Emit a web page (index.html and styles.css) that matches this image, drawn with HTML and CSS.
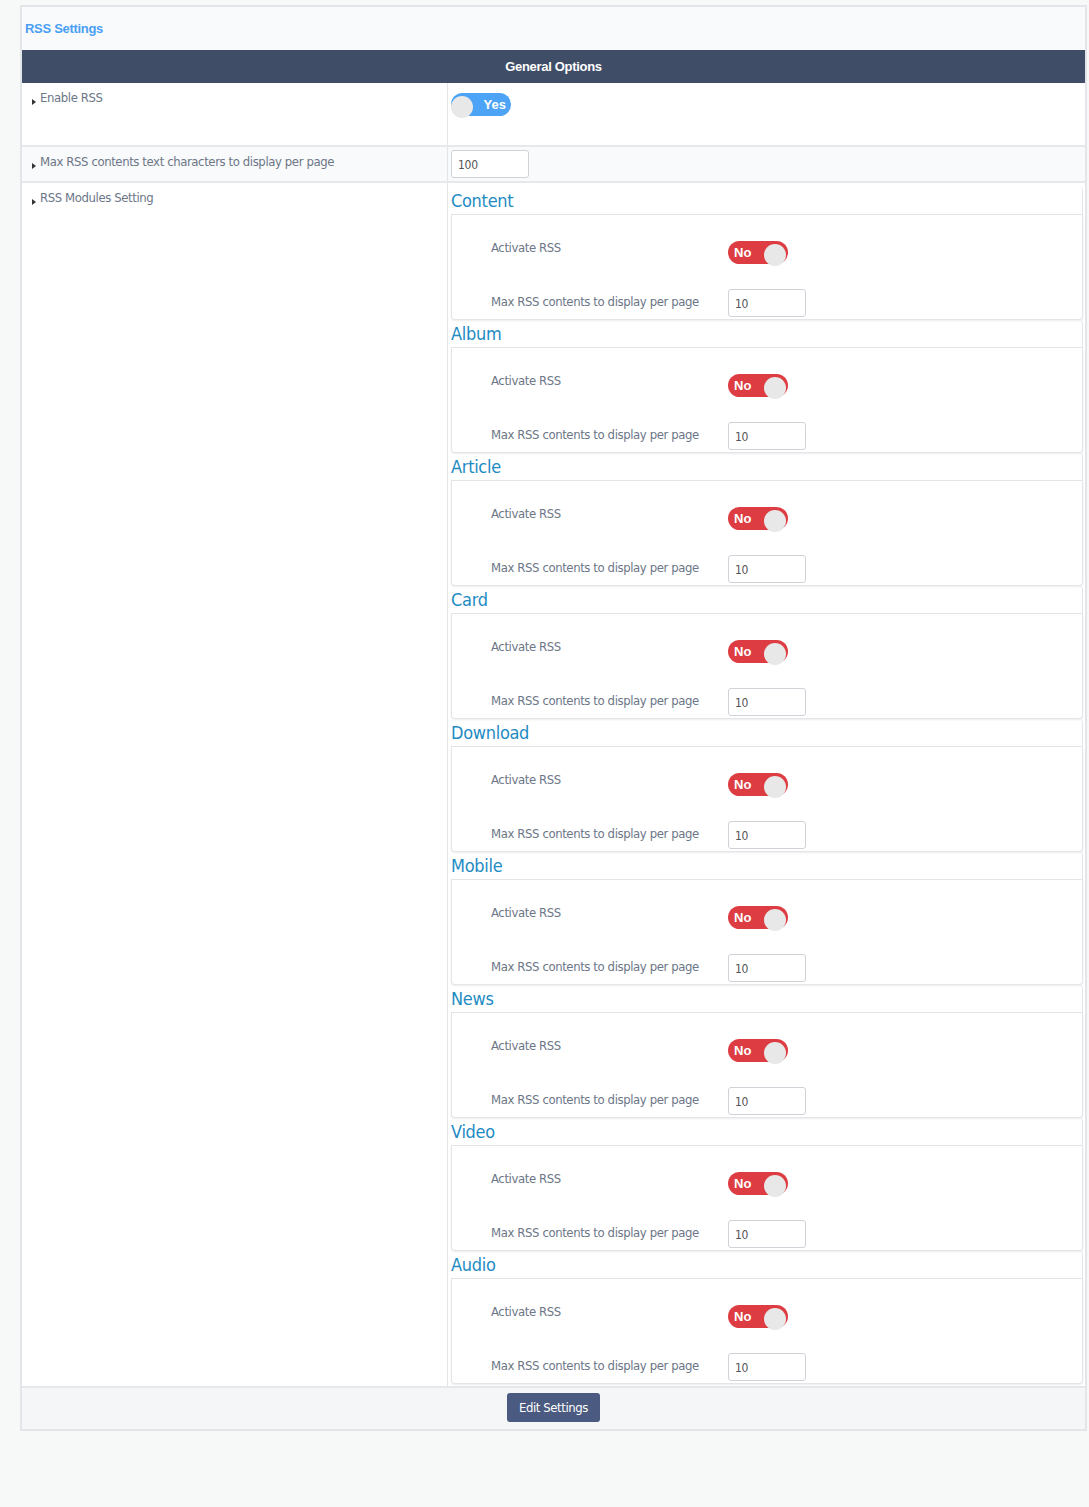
FILE: index.html
```html
<!DOCTYPE html>
<html>
<head>
    <title>RSS Settings</title>
    <link rel="stylesheet" href="styles.css">
</head>
<body>
    <div class="panel">
        <div class="panel-title">RSS Settings</div>
        <div class="section-bar">General Options</div>

        <div class="row row-enable">
            <div class="cell-label"><span class="arrow"></span>Enable RSS</div>
            <div class="cell-value">
                <span class="toggle toggle-on"><span class="knob"></span>Yes</span>
            </div>
        </div>

        <div class="row row-alt">
            <div class="cell-label"><span class="arrow"></span>Max RSS contents text characters to display per page</div>
            <div class="cell-value">
                <input type="text" class="field" value="100">
            </div>
        </div>

        <div class="row row-modules">
            <div class="cell-label"><span class="arrow"></span>RSS Modules Setting</div>
            <div class="cell-value modules" id="modules"></div>
        </div>

        <div class="footer">
            <button class="btn">Edit Settings</button>
        </div>
    </div>

    <script>
        var modules = ['Content', 'Album', 'Article', 'Card', 'Download', 'Mobile', 'News', 'Video', 'Audio'];
        var holder = document.getElementById('modules');
        modules.forEach(function(name) {
            var box = document.createElement('div');
            box.className = 'module';
            box.innerHTML =
                '<div class="module-head">' + name + '</div>' +
                '<div class="module-body">' +
                    '<div class="opt opt-toggle">' +
                        '<div class="opt-label">Activate RSS</div>' +
                        '<span class="toggle toggle-off">No<span class="knob"></span></span>' +
                    '</div>' +
                    '<div class="opt opt-input">' +
                        '<div class="opt-label">Max RSS contents to display per page</div>' +
                        '<input type="text" class="field" value="10">' +
                    '</div>' +
                '</div>';
            holder.appendChild(box);
        });
    </script>
</body>
</html>
```

FILE: styles.css
```css
body {
    margin: 0;
    background: #f7f8f8;
    font-family: "DejaVu Sans Condensed", "Liberation Sans", sans-serif;
    font-size: 13px;
    letter-spacing: -0.4px;
    color: #6c7687;
}
.panel {
    margin: 5px 2px 0 20px;
    border: 2px solid #e3e5e8;
    background: #ffffff;
}
.panel-title {
    height: 43px;
    line-height: 43px;
    padding-left: 3px;
    background: #f9fafb;
    color: #4a9ff5;
    font-family: "Liberation Sans", sans-serif;
    font-size: 13px;
    font-weight: bold;
    letter-spacing: -0.3px;
}
.section-bar {
    height: 33px;
    line-height: 33px;
    background: #3f4d67;
    color: #ffffff;
    text-align: center;
    font-family: "Liberation Sans", sans-serif;
    font-size: 13px;
    font-weight: bold;
    letter-spacing: -0.3px;
}
.row {
    display: flex;
    border-bottom: 2px solid #e6e8eb;
}
.row-alt {
    background: #f9fafb;
}
.cell-label {
    width: 415px;
    padding: 6px 0 0 10px;
    line-height: 18px;
    border-right: 1px solid #e3e5e8;
}
.arrow {
    display: inline-block;
    width: 0;
    height: 0;
    margin: 0 4px 0 0;
    border-top: 3px solid transparent;
    border-bottom: 3px solid transparent;
    border-left: 4px solid #333333;
    vertical-align: -3px;
}
.cell-value {
    flex: 1;
    padding: 3px 2px 0 3px;
}
.row-enable .cell-value {
    height: 52px;
    padding-top: 10px;
}
.row-alt .cell-value {
    height: 31px;
}
.row-modules .cell-value {
    padding-top: 4px;
}
.toggle {
    display: inline-flex;
    align-items: center;
    position: relative;
    width: 60px;
    height: 23px;
    border-radius: 12px;
    box-sizing: border-box;
    color: #ffffff;
    font-family: "Liberation Sans", sans-serif;
    font-size: 13px;
    font-weight: bold;
    letter-spacing: 0;
}
.toggle .knob {
    position: absolute;
    top: 3px;
    width: 22px;
    height: 22px;
    border-radius: 50%;
    background: #e8e8e8;
}
.toggle-on {
    background: #4da3f5;
    justify-content: flex-end;
    padding-right: 5px;
}
.toggle-on .knob {
    left: 0;
}
.toggle-off {
    background: #dd3d42;
    padding-left: 6px;
}
.toggle-off .knob {
    right: 2px;
}
.field {
    width: 78px;
    height: 28px;
    box-sizing: border-box;
    border: 1px solid #cfd3d8;
    border-radius: 3px;
    padding: 2px 6px 0;
    font-family: "DejaVu Sans Condensed", "Liberation Sans", sans-serif;
    font-size: 12px;
    letter-spacing: -0.3px;
    color: #555555;
    background: #ffffff;
}
.modules {
    padding-bottom: 2px;
}
.module-head {
    height: 27px;
    line-height: 27px;
    border-bottom: 1px solid #e3e5e8;
    border-right: 1px solid #e3e5e8;
    border-top-right-radius: 4px;
    color: #1e8bc3;
    font-size: 18px;
    letter-spacing: -0.3px;
}
.module-body {
    height: 105px;
    box-sizing: border-box;
    padding: 26px 0 0 39px;
    border: 1px solid #e3e5e8;
    border-top: none;
    border-radius: 0 0 4px 4px;
    box-shadow: 0 1px 2px rgba(0, 0, 0, 0.08);
}
.opt {
    display: flex;
    align-items: flex-start;
}
.opt-label {
    width: 237px;
    line-height: 20px;
    white-space: nowrap;
}
.opt-toggle {
    height: 23px;
    margin-bottom: 25px;
}
.opt-toggle .opt-label {
    margin-top: -3px;
}
.opt-input .opt-label {
    margin-top: 3px;
}
.footer {
    height: 41px;
    background: #f5f6f8;
    display: flex;
    justify-content: center;
    align-items: flex-start;
    padding-top: 5px;
    box-sizing: border-box;
}
.btn {
    width: 93px;
    height: 29px;
    border: none;
    border-radius: 3px;
    background: #4a5a80;
    color: #ffffff;
    font-family: "DejaVu Sans Condensed", "Liberation Sans", sans-serif;
    font-size: 13px;
    letter-spacing: -0.4px;
    cursor: pointer;
}
```
